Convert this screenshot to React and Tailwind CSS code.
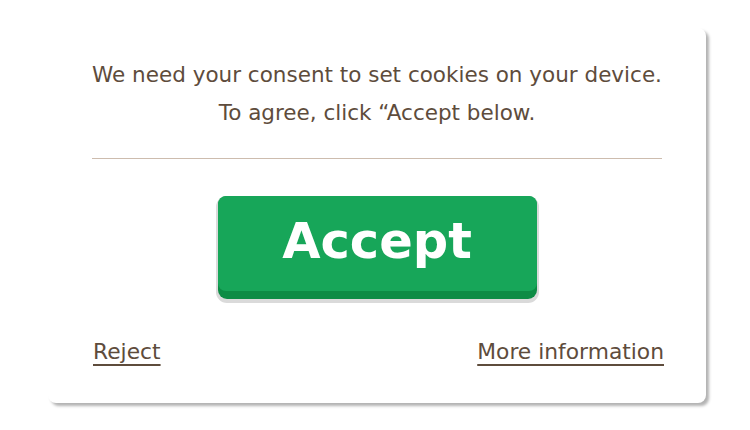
export default function App() {
  return (
    <div className="w-[750px] h-[430px] bg-white pt-[28px] pl-[48px]">
      <div
        className="w-[658px] h-[375px] bg-white rounded-[8px] shadow-[3px_3px_3px_rgba(0,0,0,0.3)] pt-[28px] px-[44px] flex flex-col items-center text-[#5e4c3c]"
        style={{ fontFamily: '"DejaVu Sans", Verdana, sans-serif' }}
      >
        <p className="text-[21.5px] leading-[38px] text-center whitespace-nowrap">
          We need your consent to set cookies on your device.
          <br />
          To agree, click “Accept below.
        </p>
        <div className="w-full h-px bg-[#cdbcae] mt-[26px]" />
        <button className="mt-[37px] w-[319px] h-[103px] rounded-[9px] bg-[#0d8c45] pb-[8px] shadow-[0_2px_0_2px_#dadada]">
          <div className="w-full h-full rounded-[8px] bg-[#17a659] flex items-center justify-center text-white font-bold text-[49.5px] leading-none pb-[3px]">
            Accept
          </div>
        </button>
        <div className="w-[572px] self-start flex justify-between mt-[41px] text-[21.8px] leading-[24px] pl-px">
          <a className="underline underline-offset-[5px] decoration-[1.5px] cursor-pointer">Reject</a>
          <a className="underline underline-offset-[5px] decoration-[1.5px] cursor-pointer">More information</a>
        </div>
      </div>
    </div>
  );
}
